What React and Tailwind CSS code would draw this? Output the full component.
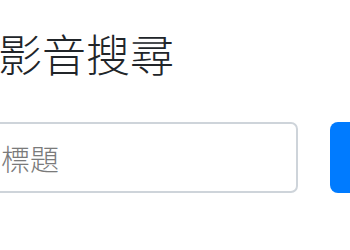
import React from "react";

function App() {
  return (
    <div className="w-[350px] h-[250px] overflow-hidden bg-white font-['Noto_Sans_CJK_TC',sans-serif]">
      {/* Title */}
      <h2 className="ml-[-2px] pt-[27px] text-[44px] leading-[52px] font-light text-[#212529] whitespace-nowrap">
        影音搜尋
      </h2>

      {/* Search row */}
      <div className="flex items-center gap-[32px] mt-[43px] ml-[-23px]">
        <input
          type="text"
          placeholder="標題"
          className="w-[321px] h-[71px] shrink-0 pl-[22px] rounded-[7px] border-2 border-[#ced4da] text-[29px] font-light placeholder:text-[#7a7a7a] outline-none"
        />
        <button className="w-[120px] h-[71px] shrink-0 rounded-[8px] bg-[#007bff] text-white text-[29px]">
          搜尋
        </button>
      </div>
    </div>
  );
}

export default App;
